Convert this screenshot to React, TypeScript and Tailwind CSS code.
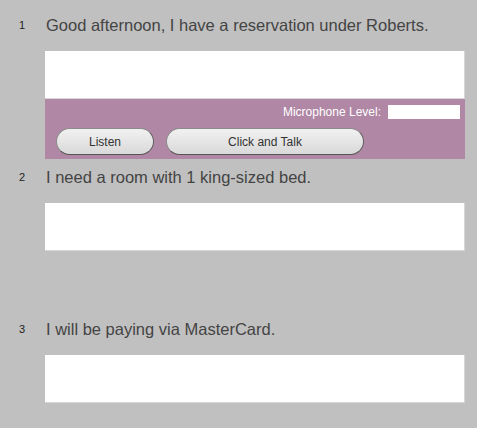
import React from "react";

type Item = { n: number; text: string; recorder: "shown" | "hidden" | "none" };

const items: Item[] = [
  { n: 1, text: "Good afternoon, I have a reservation under Roberts.", recorder: "shown" },
  { n: 2, text: "I need a room with 1 king-sized bed.", recorder: "hidden" },
  { n: 3, text: "I will be paying via MasterCard.", recorder: "none" },
];

function PillButton({ label, width }: { label: string; width: string }) {
  return (
    <button
      className={`${width} flex h-[27px] items-center justify-center rounded-full border border-[#8c8c8c] border-r-[#606060] border-b-[#555] bg-gradient-to-b from-[#f1f1f1] to-[#d9d9d9] text-[12px] text-[#333]`}
    >
      {label}
    </button>
  );
}

function Recorder({ hidden }: { hidden?: boolean }) {
  if (hidden) return <div className="h-[60px]" />;
  return (
    <div className="flex h-[60px] flex-col bg-[#b087a5] pl-[11px] pr-[5px] pt-[6px]">
      <div className="flex h-[14px] items-center justify-end gap-[7px]">
        <span className="text-[12px] leading-[14px] text-white">Microphone Level:</span>
        <div className="h-[14px] w-[72px] bg-white" />
      </div>
      <div className="mt-[9px] flex gap-[12px]">
        <PillButton label="Listen" width="w-[98px]" />
        <PillButton label="Click and Talk" width="w-[198px]" />
      </div>
    </div>
  );
}

export default function App() {
  return (
    <div
      className="min-h-[428px] w-full bg-[#c0c0c0] pt-[7px]"
      style={{ fontFamily: '"Liberation Sans", Arial, sans-serif' }}
    >
      {items.map((item) => (
        <div key={item.n} className="flex pt-[6px]">
          <div className="w-[45px] shrink-0 pl-[19px] text-[11px] leading-[24px] text-[#222]">
            {item.n}
          </div>
          <div className="w-[420px]">
            <p className="pl-[1px] text-[16.5px] leading-[24px] text-[#444]">{item.text}</p>
            <div className="mt-[14px] h-[48px] border-r border-b border-[#d6d6d6] bg-white" />
            {item.recorder !== "none" && <Recorder hidden={item.recorder === "hidden"} />}
          </div>
        </div>
      ))}
    </div>
  );
}
